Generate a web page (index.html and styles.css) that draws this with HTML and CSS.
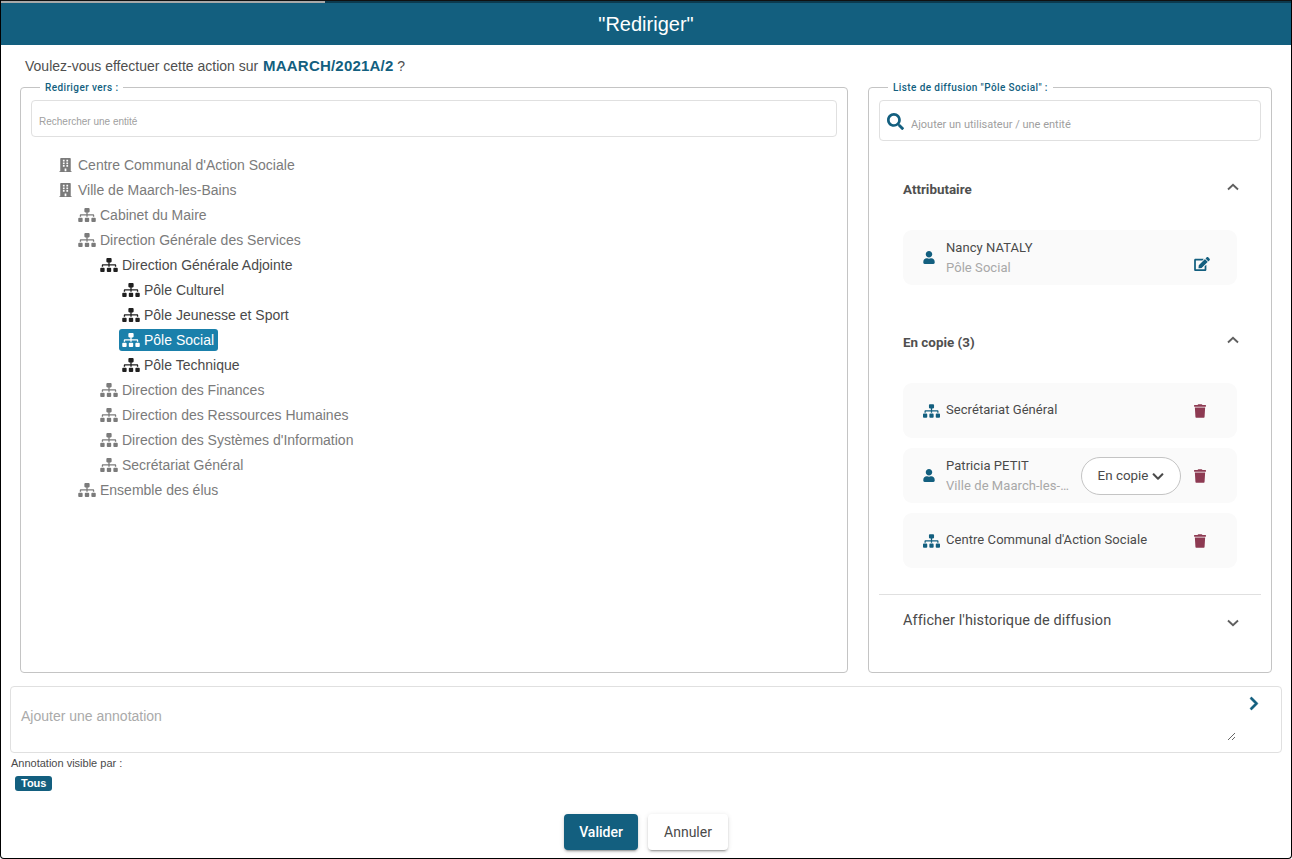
FILE: index.html
```html
<!DOCTYPE html>
<html lang="fr">
<head>
<meta charset="utf-8">
<title>Rediriger</title>
<link rel="stylesheet" href="styles.css">
</head>
<body>
<svg class="sprite" width="0" height="0" aria-hidden="true">
  <symbol id="i-sitemap" viewBox="0 0 640 512"><path d="M128 352H32c-17.67 0-32 14.33-32 32v96c0 17.67 14.33 32 32 32h96c17.67 0 32-14.33 32-32v-96c0-17.67-14.33-32-32-32zm-24-80h192v48h48v-48h192v48h48v-57.59c0-21.17-17.23-38.41-38.41-38.41H344v-64h40c17.67 0 32-14.33 32-32V32c0-17.67-14.33-32-32-32H256c-17.67 0-32 14.33-32 32v96c0 17.67 14.33 32 32 32h40v64H94.41C73.23 224 56 241.23 56 262.41V320h48v-48zm264 80h-96c-17.67 0-32 14.33-32 32v96c0 17.67 14.33 32 32 32h96c17.67 0 32-14.33 32-32v-96c0-17.67-14.33-32-32-32zm240 0h-96c-17.67 0-32 14.33-32 32v96c0 17.67 14.33 32 32 32h96c17.67 0 32-14.33 32-32v-96c0-17.67-14.33-32-32-32z"/></symbol>
  <symbol id="i-building" viewBox="0 0 448 512"><path d="M436 480h-20V24c0-13.255-10.745-24-24-24H56C42.745 0 32 10.745 32 24v456H12c-6.627 0-12 5.373-12 12v20h448v-20c0-6.627-5.373-12-12-12zM128 76c0-6.627 5.373-12 12-12h40c6.627 0 12 5.373 12 12v40c0 6.627-5.373 12-12 12h-40c-6.627 0-12-5.373-12-12V76zm0 96c0-6.627 5.373-12 12-12h40c6.627 0 12 5.373 12 12v40c0 6.627-5.373 12-12 12h-40c-6.627 0-12-5.373-12-12v-40zm52 148h-40c-6.627 0-12-5.373-12-12v-40c0-6.627 5.373-12 12-12h40c6.627 0 12 5.373 12 12v40c0 6.627-5.373 12-12 12zm76 160h-64v-84c0-6.627 5.373-12 12-12h40c6.627 0 12 5.373 12 12v84zm64-172c0 6.627-5.373 12-12 12h-40c-6.627 0-12-5.373-12-12v-40c0-6.627 5.373-12 12-12h40c6.627 0 12 5.373 12 12v40zm0-96c0 6.627-5.373 12-12 12h-40c-6.627 0-12-5.373-12-12v-40c0-6.627 5.373-12 12-12h40c6.627 0 12 5.373 12 12v40zm0-96c0 6.627-5.373 12-12 12h-40c-6.627 0-12-5.373-12-12V76c0-6.627 5.373-12 12-12h40c6.627 0 12 5.373 12 12v40z"/></symbol>
  <symbol id="i-user" viewBox="0 0 448 512"><path d="M224 256c70.7 0 128-57.3 128-128S294.7 0 224 0 96 57.3 96 128s57.3 128 128 128zm89.6 32h-16.7c-22.2 10.2-46.9 16-72.9 16s-50.6-5.8-72.9-16h-16.7C60.2 288 0 348.2 0 422.4V464c0 26.5 21.5 48 48 48h352c26.5 0 48-21.5 48-48v-41.6c0-74.2-60.2-134.4-134.4-134.4z"/></symbol>
  <symbol id="i-edit" viewBox="0 0 576 512"><path d="M402.6 83.2l90.2 90.2c3.8 3.8 3.8 10 0 13.8L274.4 405.6l-92.8 10.3c-12.4 1.4-22.9-9.1-21.5-21.5l10.3-92.8L388.8 83.2c3.8-3.8 10-3.8 13.8 0zm162-22.9l-48.8-48.8c-15.2-15.2-39.9-15.2-55.2 0l-35.4 35.4c-3.8 3.8-3.8 10 0 13.8l90.2 90.2c3.8 3.8 10 3.8 13.8 0l35.4-35.4c15.2-15.3 15.2-40 0-55.2zM384 346.2V448H64V128h229.8c3.2 0 6.2-1.3 8.5-3.5l40-40c7.6-7.6 2.2-20.5-8.5-20.5H48C21.5 64 0 85.5 0 112v352c0 26.5 21.5 48 48 48h352c26.5 0 48-21.5 48-48V306.2c0-10.7-12.9-16-20.5-8.5l-40 40c-2.2 2.3-3.5 5.3-3.5 8.5z"/></symbol>
  <symbol id="i-trash" viewBox="0 0 448 512"><path d="M432 32H312l-9.4-18.7A24 24 0 0 0 281.1 0H166.8a23.72 23.72 0 0 0-21.4 13.3L136 32H16A16 16 0 0 0 0 48v32a16 16 0 0 0 16 16h416a16 16 0 0 0 16-16V48a16 16 0 0 0-16-16zM53.2 467a48 48 0 0 0 47.9 45h245.8a48 48 0 0 0 47.9-45L416 128H32z"/></symbol>
  <symbol id="i-search" viewBox="0 0 512 512"><path d="M505 442.7L405.3 343c-4.5-4.5-10.6-7-17-7H372c27.6-35.3 44-79.7 44-128C416 93.1 322.9 0 208 0S0 93.1 0 208s93.1 208 208 208c48.3 0 92.7-16.4 128-44v16.3c0 6.4 2.5 12.5 7 17l99.7 99.7c9.4 9.4 24.6 9.4 33.9 0l28.3-28.3c9.4-9.4 9.4-24.6.1-34zM208 336c-70.7 0-128-57.2-128-128 0-70.7 57.2-128 128-128 70.7 0 128 57.2 128 128 0 70.7-57.2 128-128 128z"/></symbol>
  <symbol id="i-chevron-down" viewBox="0 0 448 512"><path d="M207.029 381.476L12.686 187.132c-9.373-9.373-9.373-24.569 0-33.941l22.667-22.667c9.357-9.357 24.522-9.375 33.901-.04L224 284.505l154.745-154.021c9.379-9.335 24.544-9.317 33.901.04l22.667 22.667c9.373 9.373 9.373 24.569 0 33.941L240.971 381.476c-9.373 9.372-24.569 9.372-33.942 0z"/></symbol>
  <symbol id="i-chevron-right" viewBox="0 0 320 512"><path d="M285.476 272.971L91.132 467.314c-9.373 9.373-24.569 9.373-33.941 0l-22.667-22.667c-9.357-9.357-9.375-24.522-.04-33.901L188.505 256 34.484 101.255c-9.335-9.379-9.317-24.544.04-33.901l22.667-22.667c9.373-9.373 24.569-9.373 33.941 0L285.475 239.03c9.373 9.372 9.373 24.568.001 33.941z"/></symbol>
</svg>

<div class="dialog">
  <div class="progress"><div class="progress-fill"></div></div>
  <h1 class="title">"Rediriger"</h1>

  <p class="question">Voulez-vous effectuer cette action sur <b class="ref">MAARCH/2021A/2</b> ?</p>

  <div class="columns">
    <fieldset class="panel panel-left">
      <legend class="legend legend-left">Rediriger vers :</legend>
      <input class="search-entity" type="text" placeholder="Rechercher une entité">
      <ul class="tree tree-root">
        <li><div class="node"><svg class="ic-building"><use href="#i-building"/></svg><span>Centre Communal d'Action Sociale</span></div></li>
        <li><div class="node"><svg class="ic-building"><use href="#i-building"/></svg><span>Ville de Maarch-les-Bains</span></div>
          <ul class="tree tree-first">
            <li><div class="node"><svg class="ic-map"><use href="#i-sitemap"/></svg><span>Cabinet du Maire</span></div></li>
            <li><div class="node"><svg class="ic-map"><use href="#i-sitemap"/></svg><span>Direction Générale des Services</span></div>
              <ul class="tree">
                <li><div class="node node-dark"><svg class="ic-map"><use href="#i-sitemap"/></svg><span>Direction Générale Adjointe</span></div>
                  <ul class="tree">
                    <li><div class="node node-dark"><svg class="ic-map"><use href="#i-sitemap"/></svg><span>Pôle Culturel</span></div></li>
                    <li><div class="node node-dark"><svg class="ic-map"><use href="#i-sitemap"/></svg><span>Pôle Jeunesse et Sport</span></div></li>
                    <li><div class="node node-selected"><svg class="ic-map"><use href="#i-sitemap"/></svg><span>Pôle Social</span></div></li>
                    <li><div class="node node-dark"><svg class="ic-map"><use href="#i-sitemap"/></svg><span>Pôle Technique</span></div></li>
                  </ul>
                </li>
                <li><div class="node"><svg class="ic-map"><use href="#i-sitemap"/></svg><span>Direction des Finances</span></div></li>
                <li><div class="node"><svg class="ic-map"><use href="#i-sitemap"/></svg><span>Direction des Ressources Humaines</span></div></li>
                <li><div class="node"><svg class="ic-map"><use href="#i-sitemap"/></svg><span>Direction des Systèmes d'Information</span></div></li>
                <li><div class="node"><svg class="ic-map"><use href="#i-sitemap"/></svg><span>Secrétariat Général</span></div></li>
              </ul>
            </li>
            <li><div class="node"><svg class="ic-map"><use href="#i-sitemap"/></svg><span>Ensemble des élus</span></div></li>
          </ul>
        </li>
      </ul>
    </fieldset>

    <fieldset class="panel panel-right">
      <legend class="legend legend-right">Liste de diffusion "Pôle Social" :</legend>
      <label class="search-user">
        <svg class="ic-search"><use href="#i-search"/></svg>
        <input type="text" placeholder="Ajouter un utilisateur / une entité">
      </label>

      <section class="group group-first">
        <header class="group-head"><h2>Attributaire</h2><svg class="caret" viewBox="0 0 12 8"><polyline points="1,6.5 6,1.8 11,6.5"/></svg></header>
        <div class="card">
          <svg class="ic-user"><use href="#i-user"/></svg>
          <div class="card-text"><div class="card-name">Nancy NATALY</div><div class="card-sub">Pôle Social</div></div>
          <svg class="ic-edit"><use href="#i-edit"/></svg>
        </div>
      </section>

      <section class="group group-copy">
        <header class="group-head"><h2>En copie (3)</h2><svg class="caret" viewBox="0 0 12 8"><polyline points="1,6.5 6,1.8 11,6.5"/></svg></header>
        <div class="cards">
          <div class="card">
            <svg class="ic-entity"><use href="#i-sitemap"/></svg>
            <div class="card-text card-text-entity"><div class="card-name">Secrétariat Général</div></div>
            <svg class="ic-trash"><use href="#i-trash"/></svg>
          </div>
          <div class="card">
            <svg class="ic-user"><use href="#i-user"/></svg>
            <div class="card-text card-text-short"><div class="card-name">Patricia PETIT</div><div class="card-sub">Ville de Maarch-les-Bains</div></div>
            <div class="pill"><span>En copie</span><svg class="ic-pill"><use href="#i-chevron-down"/></svg></div>
            <svg class="ic-trash"><use href="#i-trash"/></svg>
          </div>
          <div class="card">
            <svg class="ic-entity"><use href="#i-sitemap"/></svg>
            <div class="card-text card-text-entity"><div class="card-name">Centre Communal d'Action Sociale</div></div>
            <svg class="ic-trash"><use href="#i-trash"/></svg>
          </div>
        </div>
      </section>

      <div class="history"><span>Afficher l'historique de diffusion</span><svg class="caret caret-down" viewBox="0 0 12 8"><polyline points="1,1.5 6,6.2 11,1.5"/></svg></div>
    </fieldset>
  </div>

  <div class="note-box">
    <textarea class="note-input" placeholder="Ajouter une annotation"></textarea>
    <svg class="ic-send"><use href="#i-chevron-right"/></svg>
  </div>
  <div class="visible-label">Annotation visible par :</div>
  <div class="tags"><span class="tag">Tous</span></div>

  <div class="actions">
    <button class="btn btn-primary" type="button">Valider</button>
    <button class="btn btn-plain" type="button">Annuler</button>
  </div>
</div>
</body>
</html>
```

FILE: styles.css
```css
* { box-sizing: border-box; }
html, body { margin: 0; padding: 0; background: #fff; }
body { width: 1292px; height: 859px; overflow: hidden; font-family: "Liberation Sans", Arial, sans-serif; }
.sprite { display: block; height: 0; width: 0; overflow: hidden; }

.dialog {
  width: 1292px; height: 859px;
  border: 1px solid #000;
  border-top: 0;
  border-radius: 0 0 4px 4px;
  display: flex; flex-direction: column;
  color: #4f4f4f;
  background: #fff;
}
.progress { height: 3px; background: #0c3a4e; flex: none; border-top: 1px solid #111; }
.progress-fill { width: 324px; height: 2px; background: #a9a9a9; }
.title {
  margin: 0; flex: none; height: 42px;
  background: #135f7f; color: #fff;
  font: 400 20px/42px "Liberation Sans", sans-serif;
  text-align: center;
}
.question {
  margin: 0; flex: none;
  height: 37px;
  padding: 12px 0 0 24px;
  font-size: 14px; line-height: 18px; color: #4f4f4f;
}
.ref { color: #135f7f; font-size: 15px; font-weight: 700; letter-spacing: .2px; margin-left: 1px; }

.columns { flex: none; display: flex; gap: 20px; padding-left: 19px; height: 591px; }
.panel {
  margin: 0; padding: 0 10px;
  border: 1px solid #c4c4c4; border-radius: 4px;
  min-width: 0; height: 591px;
}
.panel-left { width: 828px; }
.panel-right { width: 404px; }
.legend {
  padding: 0 5px;
  font: 500 10px/11px Roboto, sans-serif;
  color: #135f7f;
  letter-spacing: .4px;
}
.legend-left { margin-left: 9px; }
.legend-right { margin-left: 9px; }

.search-entity {
  display: block; width: 806px; height: 37px;
  margin-top: 7px; padding: 5px 7px 0;
  border: 1px solid #e0e0e0; border-radius: 4px; outline: 0;
  font: 400 10px "Liberation Sans", sans-serif; background: #fff;
}
.search-entity::placeholder { color: #a0a0a0; opacity: 1; }

.tree { list-style: none; margin: 0; padding: 0 0 0 22px; }
.tree-root { padding: 15px 0 0 28px; }
.tree-first { padding-left: 19px; }
.node {
  display: inline-flex; align-items: center; vertical-align: top;
  height: 25px; font-size: 14px; color: #7b7b7b; white-space: nowrap;
}
.node-dark { color: #4a4a4a; }
.node-selected { color: #fff; position: relative; z-index: 0; }
.node-selected::after {
  content: ""; position: absolute; z-index: -1;
  left: -3px; right: -4px; top: 2px; bottom: 1px;
  background: #1a80ab; border-radius: 3px;
}
.ic-building { width: 13px; height: 14px; margin-right: 6px; fill: #7b7b7b; flex: none; }
.ic-map { width: 18px; height: 14px; margin-right: 4px; fill: #7b7b7b; flex: none; }
.node-dark .ic-map { fill: #202020; }
.node-selected .ic-map { fill: #fff; }

.search-user {
  display: flex; align-items: center; gap: 7px;
  height: 41px; margin-top: 7px; padding: 4px 0 0 7px;
  border: 1px solid #e0e0e0; border-radius: 4px;
}
.search-user input {
  flex: 1; min-width: 0; border: 0; outline: 0; padding: 4px 0 0; background: transparent;
  font: 400 11px Roboto, sans-serif;
}
.search-user input::placeholder { color: #a0a0a0; opacity: 1; }
.ic-search { width: 17px; height: 17px; fill: #135f7f; flex: none; margin-top: -2px; }

.group { padding: 0 24px; }
.group-head { display: flex; justify-content: space-between; align-items: center; height: 20px; }
.group-head h2 { margin: 0; font: 700 13.4px/20px Roboto, sans-serif; color: #4f4f4f; }
.group-first { margin-top: 39px; }
.group-copy { margin-top: 48px; }
.group-first .card { margin-top: 30px; }
.group-copy .cards { margin-top: 30px; display: flex; flex-direction: column; gap: 10px; }
.caret { width: 12px; height: 8px; margin: -7px -2px 0 0; fill: none; stroke: #5f5f5f; stroke-width: 1.9; flex: none; }

.card {
  height: 55px; width: 334px;
  display: flex; align-items: center;
  padding: 0 30px 0 20px;
  background: #fafafa; border-radius: 9px;
}
.ic-user { width: 12px; height: 13px; fill: #135f7f; flex: none; margin: 0 11px 0 0; }
.ic-entity { width: 17px; height: 14px; fill: #135f7f; flex: none; margin-right: 6px; }
.card-text { flex: 1; min-width: 0; font: 400 13px/20px Roboto, sans-serif; letter-spacing: .06px; }
.card-text-entity { margin-top: -1px; }
.card-text-short { flex: none; width: 130px; }
.card-name { color: #4a4a4a; white-space: nowrap; }
.card-sub { color: #a8a8a8; white-space: nowrap; overflow: hidden; text-overflow: ellipsis; }
.ic-edit { width: 16px; height: 14px; fill: #135f7f; flex: none; margin: 27px -3px 0 0; align-self: flex-start; }
.ic-trash { width: 12px; height: 14px; fill: #8d3a52; flex: none; margin-right: 1px; }
.pill {
  flex: none; width: 100px; height: 38px; margin: 0 13px 0 5px;
  display: flex; align-items: center; justify-content: center; gap: 4px;
  border: 1px solid #c4c4c4; border-radius: 19px; background: #fff;
  font: 400 13.4px Roboto, sans-serif; color: #4a4a4a;
}
.ic-pill { width: 12px; height: 13px; fill: #4a4a4a; flex: none; margin-top: 1px; }

.history {
  margin-top: 26px; padding: 13px 22px 0 24px; height: 50px;
  border-top: 1px solid #e0e0e0;
  display: flex; justify-content: space-between; align-items: flex-start;
  font: 400 14.5px/25px Roboto, sans-serif; letter-spacing: .09px; color: #4a4a4a;
}
.history .caret { margin-top: 11px; margin-right: 0; }

.note-box {
  flex: none; margin: 13px 0 0 9px; width: 1272px; height: 67px;
  display: flex; align-items: flex-start;
  border: 1px solid #e0e0e0; border-radius: 4px;
}
.note-input {
  flex: none; display: block; width: 1225px; height: 54px; padding: 20px 10px 0;
  border: 0; outline: 0; background: transparent;
  font: 400 14px/18px "Liberation Sans", sans-serif; color: #4a4a4a;
}
.note-input::placeholder { color: #aaa; opacity: 1; }
.ic-send { width: 10px; height: 15px; fill: #135f7f; stroke: #135f7f; stroke-width: 14px; flex: none; margin: 9px 0 0 13px; }

.visible-label { flex: none; margin: 4px 0 0 10px; font-size: 11px; line-height: 13px; color: #4a4a4a; }
.tags { flex: none; margin: 6px 0 0 14px; height: 16px; display: flex; }
.tag {
  height: 15px; padding: 0 6px; background: #135f7f; color: #fff;
  font-size: 11px; font-weight: 700; line-height: 14px; border-radius: 3px;
}
.actions { flex: none; margin-top: 22px; display: flex; justify-content: center; gap: 10px; }
.btn {
  height: 36px; border: 0; border-radius: 4px; padding: 0;
  font: 400 14px Roboto, sans-serif; cursor: pointer;
  box-shadow: 0 3px 1px -2px rgba(0,0,0,.2), 0 2px 2px 0 rgba(0,0,0,.14), 0 1px 5px 0 rgba(0,0,0,.12);
}
.btn-primary { width: 74px; background: #135f7f; color: #fff; font-weight: 500; }
.btn-plain { width: 80px; background: #fff; color: #4a4a4a; }
```
